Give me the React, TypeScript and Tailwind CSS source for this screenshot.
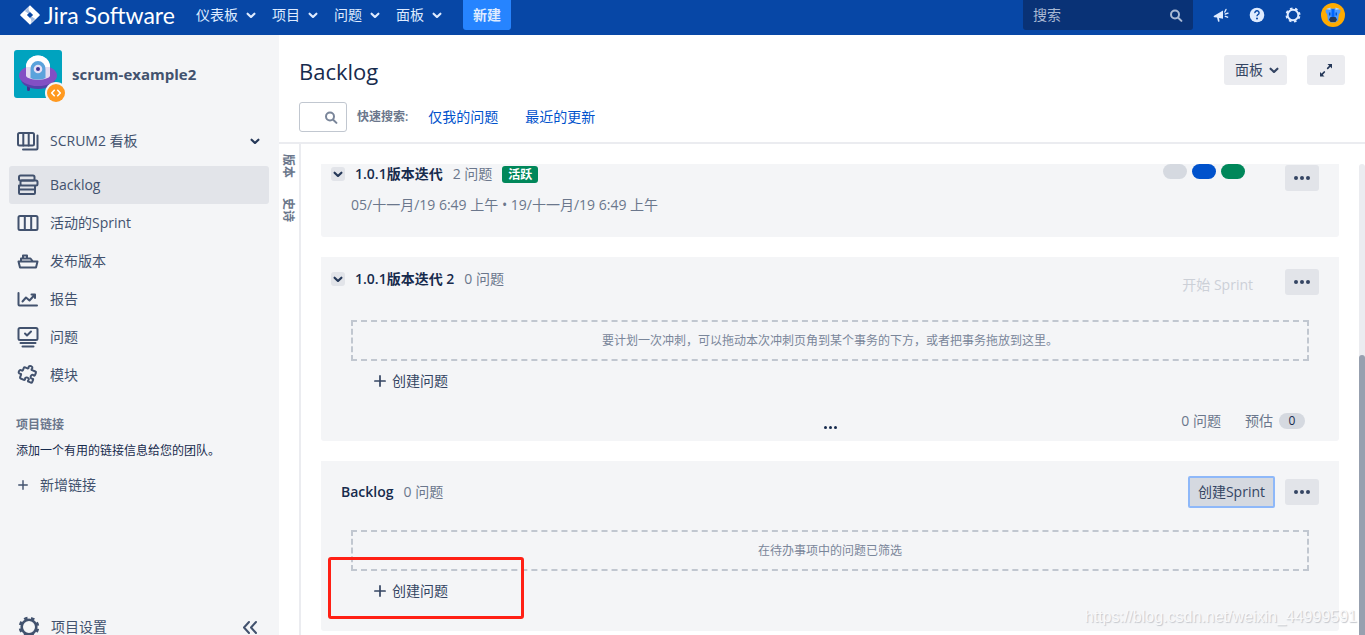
import type { ReactNode } from 'react';

interface IconProps {
  className?: string;
}

function ChevronIcon({ className = '' }: IconProps) {
  return (
    <svg viewBox="7 8 10 8" className={`w-[10px] h-2 shrink-0 ${className}`} fill="currentColor" aria-hidden="true">
      <path d="M7.8 9.9a1.1 1.1 0 000 1.5l3.4 3.3c.22.22.5.33.8.33s.57-.11.79-.33l3.4-3.3a1.1 1.1 0 000-1.5 1.07 1.07 0 00-1.5 0L12 12.5 9.3 9.9a1.07 1.07 0 00-1.5 0z" />
    </svg>
  );
}

function SearchIcon({ className = '' }: IconProps) {
  return (
    <svg viewBox="0 0 14 14" className={`w-[14px] h-[14px] shrink-0 ${className}`} fill="none" stroke="currentColor" strokeWidth="2" strokeLinecap="round" aria-hidden="true">
      <circle cx="6" cy="6.5" r="4" />
      <path d="M9.2 9.7l3.2 3.2" />
    </svg>
  );
}

function PlusIcon({ className = '' }: IconProps) {
  return (
    <svg viewBox="0 0 12 12" className={`shrink-0 ${className}`} stroke="currentColor" strokeWidth="1.7" strokeLinecap="round" aria-hidden="true">
      <path d="M6 .9v10.2M.9 6h10.2" />
    </svg>
  );
}

function GearIcon({ className = '' }: IconProps) {
  return (
    <svg viewBox="0 0 22 22" className={`shrink-0 ${className}`} fill="none" stroke="currentColor" aria-hidden="true">
      <circle cx="11" cy="11" r="7.3" strokeWidth="2.6" />
      <circle cx="11" cy="11" r="9" strokeWidth="2.6" strokeDasharray="3.5 3.568" strokeDashoffset="-1.8" />
    </svg>
  );
}

function JiraLogo() {
  return (
    <svg viewBox="0 0 20 20" className="w-5 h-5 shrink-0" aria-hidden="true">
      <path fill="#fff" fillRule="evenodd" d="M10 .2L19.4 9.2a1.1 1.1 0 010 1.6L10 19.8.6 10.8a1.1 1.1 0 010-1.6zM10 6.9L6.9 10l3.1 3.1 3.1-3.1z" />
      <path fill="#0747a6" opacity=".35" d="M10 6.9c-1.7-1.7-1.7-3.7-.7-5.4L4.800 6.100 8.400 8.500z" />
      <path fill="#0747a6" opacity=".35" d="M10 13.100c1.700 1.700 1.700 3.700.7 5.400l4.500-4.600-3.600-2.400z" />
    </svg>
  );
}

function ProjectAvatar() {
  return (
    <svg viewBox="0 0 54 54" className="w-[54px] h-[54px]" aria-hidden="true">
      <rect width="48" height="48" rx="3" fill="#00a3bf" />
      <path d="M13 34h3v5.500a1.500 1.500 0 01-3 0zM32 34h3v5.500a1.500 1.500 0 01-3 0z" fill="#403294" />
      <ellipse cx="24" cy="29" rx="17" ry="10" fill="#5243aa" />
      <ellipse cx="24" cy="25.500" rx="19" ry="10.500" fill="#8250c4" />
      <path d="M12 17a12 11.500 0 0124 0v9c-3 5-21 5-24 0z" fill="#e3dcf1" />
      <path d="M12 17a12 11.500 0 0124 0z" fill="#fff" />
      <path d="M16.500 19a7.500 8 0 0115 0v9c-4 2-11 2-15 0z" fill="#5ba3dc" />
      <circle cx="24" cy="19" r="4.300" fill="#e6e0f5" />
      <circle cx="24" cy="19" r="2" fill="#403294" />
      <circle cx="42" cy="43" r="11" fill="#f4f5f7" />
      <circle cx="42" cy="43" r="9" fill="#ff991f" />
      <path d="M40.300 40.300L37.700 43l2.600 2.700M43.700 40.300l2.600 2.700-2.600 2.700" fill="none" stroke="#fff" strokeWidth="1.600" strokeLinecap="round" strokeLinejoin="round" />
    </svg>
  );
}

function UserAvatar() {
  return (
    <svg viewBox="0 0 24 24" className="w-6 h-6" aria-hidden="true">
      <circle cx="12" cy="12" r="12" fill="#ffab00" />
      <path d="M4.500 7l4.500-1.500h6L19.500 7l-.5 3.500h-1l-1 7-3 2h-4l-3-2-1-7H5z" fill="#4c9aff" />
      <path d="M10.500 6h3v8h-3z" fill="#0065ff" />
      <path d="M5 6l4.500-1.500V7zM19 6l-4.500-1.500V7z" fill="#b3d4ff" />
      <path d="M8 9.500h1.500v3H8zM14.500 9.500H16v3h-1.500z" fill="#0052cc" />
      <path d="M9.500 14h5l1.500 2.500-1.500 2.500h-5L8 16.500z" fill="#253858" />
    </svg>
  );
}

function NavIcon({ children }: { children: ReactNode }) {
  return (
    <svg viewBox="0 0 22 22" className="w-[22px] h-[22px] shrink-0" fill="none" stroke="currentColor" strokeWidth="2" strokeLinecap="round" strokeLinejoin="round" aria-hidden="true">
      {children}
    </svg>
  );
}

const boardIcon = (
  <NavIcon>
    <rect x="1" y="3" width="16" height="12.500" rx="1.500" />
    <path d="M6.300 3.500v12M11.700 3.500v12M6 19.500h13.500a1 1 0 001-1V5.500" />
  </NavIcon>
);

const NAV_ITEMS: { label: string; active?: boolean; icon: ReactNode }[] = [
  {
    label: 'Backlog',
    active: true,
    icon: (
      <NavIcon>
        <rect x="2" y="1.500" width="15.500" height="5" rx="1.500" />
        <rect x="3.500" y="6.500" width="17" height="5" rx="1.500" />
        <path d="M3.500 11.500H2V19a1 1 0 001 1h14a1 1 0 001-1v-7M2 15.500h16" />
      </NavIcon>
    ),
  },
  {
    label: '活动的Sprint',
    icon: (
      <NavIcon>
        <rect x="1.500" y="4" width="19" height="14" rx="1.500" />
        <path d="M7.800 4.500v13M14.200 4.500v13" />
      </NavIcon>
    ),
  },
  {
    label: '发布版本',
    icon: (
      <NavIcon>
        <path d="M1.500 11.500h19l-1.500 6H3zM4 11V8.500h9.500l2 2.500M6 8V5.500h4V8" />
      </NavIcon>
    ),
  },
  {
    label: '报告',
    icon: (
      <NavIcon>
        <path d="M1.500 5v11.500a1 1 0 001 1H20M5.500 13.500l3.500-4 3.500 3 5-5.500M14.500 6.500H18V10" />
      </NavIcon>
    ),
  },
  {
    label: '问题',
    icon: (
      <NavIcon>
        <rect x="1.500" y="2" width="19" height="12" rx="1.500" />
        <path d="M8 7.500l2 2 4-4M3.500 17h15M5.500 20.500h11" />
      </NavIcon>
    ),
  },
  {
    label: '模块',
    icon: (
      <NavIcon>
        <path
          transform="rotate(22 11 11)"
          d="M5.500 5H8c.8 0 1-.6.7-1.200C7.500 1 13.500 1 12.300 3.800c-.3.600-.1 1.200.7 1.200h3.500a1 1 0 011 1v2.500c0 .8-.6 1-1.200.7-3-1.200-3 4.800 0 3.600.6-.3 1.200-.1 1.200.7v2.500a1 1 0 01-1 1H14c-.8 0-1-.6-.7-1.200 1.200-2.800-4.800-2.800-3.600 0 .3.600.1 1.200-.7 1.200H5.500a1 1 0 01-1-1v-2.500c0-.8-.6-1-1.200-.7-2.800 1.200-2.800-4.800 0-3.600.6.300 1.200.1 1.200-.7V6a1 1 0 011-1z"
        />
      </NavIcon>
    ),
  },
];

const TOP_MENUS = ['仪表板', '项目', '问题', '面板'];

function TopBar() {
  return (
    <header className="flex h-[35px] shrink-0 items-center bg-[#0747a6] pb-[5px] pl-5 pr-5 text-[#deebff]">
      <a href="#" className="flex items-center gap-1 text-white">
        <JiraLogo />
        <span className="w-[132px] whitespace-nowrap font-['Lato','Open_Sans',sans-serif] text-[23px] leading-[30px]">Jira Software</span>
      </a>
      <nav className="ml-5 flex items-center gap-4">
        {TOP_MENUS.map(menu => (
          <button key={menu} type="button" className="flex items-center gap-2 leading-[30px]">
            {menu}
            <ChevronIcon />
          </button>
        ))}
      </nav>
      <button type="button" className="ml-[21px] h-[30px] rounded-b-[3px] bg-[#2684ff] px-[10px] font-semibold">新建</button>
      <div className="ml-auto flex items-center">
        <label className="mr-5 flex h-[30px] w-[170px] items-center rounded-b-[3px] bg-[#093276] px-[10px] text-[#a9b9d4]">
          <input type="text" aria-label="搜索" placeholder="搜索" className="min-w-0 flex-1 bg-transparent outline-none placeholder:text-[#a9b9d4]" />
          <SearchIcon />
        </label>
        <div className="flex items-center gap-5">
          <button type="button" aria-label="反馈">
            <svg viewBox="0 0 16 16" className="w-4 h-4" fill="currentColor" aria-hidden="true">
              <path d="M10 3.500v8.200L6 11l.6 3.500-1.500.3-1.100-4.200-2.700-.4a.8.800 0 01-.2-1.500z" />
              <path d="M11.800 5l1.200-2.500M12.300 7l2.700-.8M12.300 9.300l2.300.9" stroke="currentColor" strokeWidth="1.400" strokeLinecap="round" />
            </svg>
          </button>
          <button type="button" aria-label="帮助">
            <svg viewBox="0 0 16 16" className="w-4 h-4" fill="none" aria-hidden="true">
              <circle cx="8" cy="8" r="7.300" fill="currentColor" />
              <path d="M5.900 6.200a2.100 2.100 0 114 .5c-.4.900-1.900 1-1.900 2.500" stroke="#0747a6" strokeWidth="1.400" />
              <circle cx="8" cy="11.500" r="1" fill="#0747a6" />
            </svg>
          </button>
          <button type="button" aria-label="设置">
            <GearIcon className="w-4 h-4" />
          </button>
          <button type="button" aria-label="用户">
            <UserAvatar />
          </button>
        </div>
      </div>
    </header>
  );
}

function Sidebar() {
  return (
    <aside className="flex w-[279px] shrink-0 flex-col bg-[#f4f5f7] pt-[15px] text-[#42526e]">
      <div className="mb-[18px] flex items-center gap-1 pl-[14px]">
        <ProjectAvatar />
        <span className="pb-[6px] text-[15px] font-bold leading-5">scrum-example2</span>
      </div>
      <nav className="pl-[9px] pr-[10px]">
        <button type="button" className="mb-[6px] flex h-[38px] w-full items-center gap-[11px] pl-2 pr-[9px]">
          {boardIcon}
          <span className="flex-1 text-left">SCRUM2 看板</span>
          <ChevronIcon className="text-[#253858]" />
        </button>
        {NAV_ITEMS.map(item => (
          <a
            key={item.label}
            href="#"
            className={`flex h-[38px] items-center gap-[11px] rounded-[3px] pl-2 ${item.active ? 'bg-[#e2e4e9] font-medium' : ''}`}
          >
            {item.icon}
            {item.label}
          </a>
        ))}
      </nav>
      <section className="px-4 pt-[21px]">
        <h2 className="text-xs font-semibold leading-5 text-[#6b778c]">项目链接</h2>
        <p className="mt-[6px] text-xs leading-5 text-[#172b4d]">添加一个有用的链接信息给您的团队。</p>
        <button type="button" className="mt-[14px] flex items-center gap-3 pl-[2px] leading-5">
          <PlusIcon className="w-[10px] h-[10px]" />
          新增链接
        </button>
      </section>
      <div className="mt-auto flex h-4 items-center justify-between pl-[18px] pr-[21px]">
        <a href="#" className="flex items-center gap-[11px]">
          <GearIcon className="w-[22px] h-[22px]" />
          项目设置
        </a>
        <button type="button" aria-label="收起">
          <svg viewBox="0 0 16 14" className="w-4 h-[14px]" fill="none" stroke="currentColor" strokeWidth="2" strokeLinecap="round" strokeLinejoin="round" aria-hidden="true">
            <path d="M7 2L2 7.500 7 13M14 2L9 7.500l5 5.500" />
          </svg>
        </button>
      </div>
    </aside>
  );
}

function MoreButton() {
  return (
    <button type="button" aria-label="更多" className="flex h-[26px] w-[34px] items-center justify-center gap-[2px] rounded-[3px] bg-[#e2e4e9]">
      <span className="size-1 rounded-full bg-[#344563]" />
      <span className="size-1 rounded-full bg-[#344563]" />
      <span className="size-1 rounded-full bg-[#344563]" />
    </button>
  );
}

function SprintTitle({ name, count, children }: { name: string; count: number; children?: ReactNode }) {
  return (
    <div className="flex items-center leading-5">
      <h2 className="font-semibold text-[#172b4d]">{name}</h2>
      <span className="ml-[10px] text-[#6b778c]">{count} 问题</span>
      {children}
    </div>
  );
}

function CollapseButton() {
  return (
    <button type="button" aria-label="折叠" className="mr-[10px] flex size-[14px] items-center justify-center rounded-[3px] bg-[#e2e4e9] text-[#253858]">
      <ChevronIcon />
    </button>
  );
}

function DropZone({ text }: { text: string }) {
  return (
    <div className="ml-[30px] mr-[30px] flex h-[41px] items-center justify-center border-2 border-dashed border-[#c1c7d0] text-xs text-[#7a869a]">
      {text}
    </div>
  );
}

function CreateIssue() {
  return (
    <button type="button" className="ml-[53px] mt-[10px] flex items-center gap-[6px] leading-5 text-[#344563]">
      <PlusIcon className="w-3 h-3" />
      创建问题
    </button>
  );
}

function Board() {
  return (
    <div className="flex min-w-0 flex-1 flex-col overflow-hidden pl-5 pr-5 pt-5">
      <div className="flex flex-col gap-5">
        <section className="h-[73px] rounded-b-[3px] bg-[#f4f5f7]">
          <div className="flex items-start pl-[10px] pr-5">
            <div className="flex items-center">
              <CollapseButton />
              <SprintTitle name="1.0.1版本迭代" count={2}>
                <span className="ml-[10px] rounded-[3px] bg-[#00875a] px-[6px] text-xs font-semibold leading-[17px] text-white">活跃</span>
              </SprintTitle>
            </div>
            <div className="ml-auto flex gap-[5px]">
              <span className="h-[15px] w-6 rounded-full bg-[#d5d9e0]" />
              <span className="h-[15px] w-6 rounded-full bg-[#0052cc]" />
              <span className="h-[15px] w-6 rounded-full bg-[#00875a]" />
            </div>
            <div className="ml-10 mt-px">
              <MoreButton />
            </div>
          </div>
          <p className="ml-[30px] mt-1 leading-5 text-[#6b778c]">05/十一月/19 6:49 上午 • 19/十一月/19 6:49 上午</p>
        </section>

        <section className="rounded-b-[3px] bg-[#f4f5f7] pb-[10px]">
          <div className="mb-[23px] flex items-start pl-[10px] pr-5 pt-3">
            <div className="flex items-center">
              <CollapseButton />
              <SprintTitle name="1.0.1版本迭代 2" count={0} />
            </div>
            <button type="button" disabled className="ml-auto mr-8 pt-1 leading-6 text-[#ccd0d7]">开始 Sprint</button>
            <MoreButton />
          </div>
          <DropZone text="要计划一次冲刺，可以拖动本次冲刺页角到某个事务的下方，或者把事务拖放到这里。" />
          <CreateIssue />
          <div className="mt-5 grid grid-cols-[1fr_auto_1fr] items-center pl-[34px] pr-[34px] leading-5 text-[#6b778c]">
            <span />
            <span className="flex gap-[2px] pt-3" aria-hidden="true">
              <i className="size-[3px] rounded-full bg-[#172b4d]" />
              <i className="size-[3px] rounded-full bg-[#172b4d]" />
              <i className="size-[3px] rounded-full bg-[#172b4d]" />
            </span>
            <div className="flex items-center justify-end">
              <span className="mr-6">0 问题</span>
              <span className="mr-[6px]">预估</span>
              <span className="w-[26px] rounded-full bg-[#d5d9e0] text-center text-xs leading-4 text-[#172b4d]">0</span>
            </div>
          </div>
        </section>

        <section className="relative rounded-b-[3px] bg-[#f4f5f7] pb-[30px]">
          <div className="mb-[22px] flex items-center pl-5 pr-5 pt-[15px]">
            <SprintTitle name="Backlog" count={0} />
            <button type="button" className="ml-auto mr-[10px] h-8 rounded-[2px] border-2 border-[#8eb8f9] bg-[#d5d9e0] px-2 text-[#344563]">
              创建Sprint
            </button>
            <MoreButton />
          </div>
          <DropZone text="在待办事项中的问题已筛选" />
          <CreateIssue />
          <div className="absolute bottom-3 left-[7px] h-[62px] w-[196px] rounded-[3px] border-[3px] border-[#ff2015]" />
        </section>
      </div>
    </div>
  );
}

function Main() {
  return (
    <main className="flex min-w-0 flex-1 flex-col bg-white">
      <div className="mt-5 flex h-[30px] items-center px-5">
        <h1 className="pt-[2px] text-[22px] leading-[30px] text-[#172b4d]">Backlog</h1>
        <button type="button" className="ml-auto mr-5 flex h-[30px] items-center gap-[6px] rounded-[3px] bg-[#ebecf0] pl-[11px] pr-2 text-[#344563]">
          面板
          <ChevronIcon />
        </button>
        <button type="button" aria-label="全屏" className="flex h-[30px] w-[38px] items-center justify-center rounded-[3px] bg-[#ebecf0] text-[#253858]">
          <svg viewBox="0 0 14 14" className="w-[14px] h-[14px]" fill="currentColor" aria-hidden="true">
            <path d="M8.500 1H13v4.500zM1 9v4.500h4.500z" />
            <path d="M8.700 5.300L11 3M5.300 9L3 11.300" stroke="currentColor" strokeWidth="1.700" strokeLinecap="round" />
          </svg>
        </button>
      </div>
      <div className="mt-[17px] flex items-center border-b-2 border-[#ebecf0] px-5 pb-[10px]">
        <label className="flex h-[30px] w-12 items-center rounded-[3px] border border-[#c1c7d0] pr-2 text-[#7a869a]">
          <input type="text" aria-label="搜索问题" className="min-w-0 flex-1 bg-transparent pl-2 outline-none" />
          <SearchIcon />
        </label>
        <span className="ml-[10px] text-xs font-semibold text-[#6b778c]">快速搜索:</span>
        <a href="#" className="ml-5 text-[#0052cc]">仅我的问题</a>
        <a href="#" className="ml-[27px] text-[#0052cc]">最近的更新</a>
      </div>
      <div className="flex min-h-0 flex-1">
        <div className="flex w-[22px] shrink-0 flex-col items-start gap-5 border-r-2 border-[#ebecf0] pt-[10px] text-xs font-semibold text-[#6b778c]">
          <button type="button" className="leading-[18px] [text-orientation:sideways] [writing-mode:vertical-rl]">版本</button>
          <button type="button" className="leading-[18px] [text-orientation:sideways] [writing-mode:vertical-rl]">史诗</button>
        </div>
        <Board />
        <div className="mt-5 flex w-[6px] flex-col rounded-t-full bg-[#ebecf0]">
          <div className="mt-[191px] flex-1 rounded-t-full bg-[#97a0af]" />
        </div>
      </div>
    </main>
  );
}

export default function App() {
  return (
    <div className="relative flex h-screen flex-col overflow-hidden font-['Open_Sans','Noto_Sans_CJK_SC',sans-serif] text-sm">
      <TopBar />
      <div className="flex min-h-0 flex-1">
        <Sidebar />
        <Main />
      </div>
      <span className="pointer-events-none absolute bottom-2 right-2 font-['Liberation_Sans',sans-serif] text-base leading-5 text-[#f9f9fa] [text-shadow:1px_1px_1px_#c3c6cc]">
        https://blog.csdn.net/weixin_44999591
      </span>
    </div>
  );
}
